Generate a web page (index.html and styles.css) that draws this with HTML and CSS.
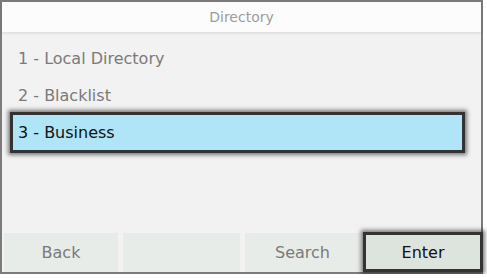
FILE: index.html
```html
<!DOCTYPE html>
<html>
<head>
<meta charset="utf-8">
<link rel="stylesheet" href="styles.css">
</head>
<body>
<div class="screen">
  <div class="header">Directory</div>
  <div class="list">
    <div class="item">1 - Local Directory</div>
    <div class="item">2 - Blacklist</div>
    <div class="item selected">3 - Business</div>
  </div>
  <div class="softkeys">
    <div class="key">Back</div>
    <div class="key"></div>
    <div class="key">Search</div>
    <div class="key active">Enter</div>
  </div>
</div>
</body>
</html>
```
FILE: styles.css
```css
html, body {
  margin: 0;
  padding: 0;
  background: #ffffff;
}
.screen {
  width: 479px;
  height: 270px;
  border: 2px solid #7b7b7b;
  background: #f2f2f2;
  display: flex;
  flex-direction: column;
  font-family: "DejaVu Sans", Verdana, sans-serif;
}
.header {
  height: 30px;
  background: #fbfcfb;
  color: #9c9c9c;
  font-size: 14px;
  display: flex;
  align-items: center;
  justify-content: center;
  box-shadow: 0 1px 3px rgba(0,0,0,0.12);
  position: relative;
  z-index: 1;
}
.list {
  flex: 1;
  display: flex;
  flex-direction: column;
  padding: 8px 16px 0 8px;
}
.item {
  height: 37px;
  display: flex;
  align-items: center;
  padding-left: 8px;
  color: #7a7a7a;
  font-size: 16px;
  box-sizing: border-box;
  flex-shrink: 0;
}
.item.selected {
  background: #b0e4f7;
  color: #111;
  border: 3px solid #333;
  box-shadow: 0 0 4px 2px rgba(0,0,0,0.5);
  padding-left: 5px;
  height: 41px;
  margin-top: -2px;
  margin-left: 0;
}
.softkeys {
  height: 39px;
  display: grid;
  grid-template-columns: 114px 117px 115px 118px;
  column-gap: 5px;
  padding-left: 2px;
}
.softkeys .key:nth-child(4) {
  margin-left: -2px;
}
.key {
  background: #e8ece8;
  color: #7a7a7a;
  font-size: 16px;
  display: flex;
  align-items: center;
  justify-content: center;
}
.key.active {
  background: #dde3dd;
  color: #111;
  border: 3px solid #333;
  box-shadow: 0 0 4px 2px rgba(0,0,0,0.5);
  margin-top: -1px;
  height: 40px;
  box-sizing: border-box;
}
```
